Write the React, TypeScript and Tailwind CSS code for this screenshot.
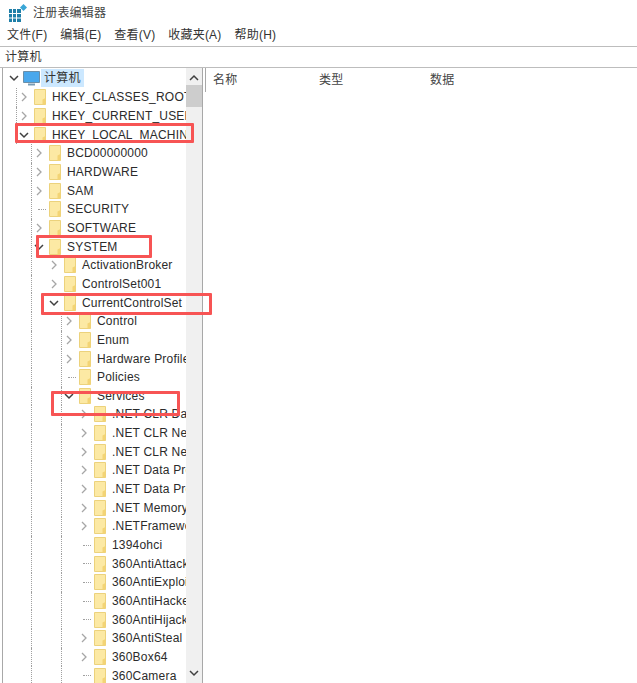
import React from "react";

const menus = ["文件(F)", "编辑(E)", "查看(V)", "收藏夹(A)", "帮助(H)"];

type Row = { name: string; level: number; arrow: "open" | "closed" | "none"; lines: number[] };

const rows: Row[] = [
    { name: "HKEY_CLASSES_ROOT", level: 1, arrow: "closed", lines: [0] },
    { name: "HKEY_CURRENT_USER", level: 1, arrow: "closed", lines: [0] },
    { name: "HKEY_LOCAL_MACHINE", level: 1, arrow: "open", lines: [0] },
    { name: "BCD00000000", level: 2, arrow: "closed", lines: [1] },
    { name: "HARDWARE", level: 2, arrow: "closed", lines: [1] },
    { name: "SAM", level: 2, arrow: "closed", lines: [1] },
    { name: "SECURITY", level: 2, arrow: "none", lines: [1] },
    { name: "SOFTWARE", level: 2, arrow: "closed", lines: [1] },
    { name: "SYSTEM", level: 2, arrow: "open", lines: [1] },
    { name: "ActivationBroker", level: 3, arrow: "closed", lines: [1] },
    { name: "ControlSet001", level: 3, arrow: "closed", lines: [1] },
    { name: "CurrentControlSet", level: 3, arrow: "open", lines: [1] },
    { name: "Control", level: 4, arrow: "closed", lines: [1, 3] },
    { name: "Enum", level: 4, arrow: "closed", lines: [1, 3] },
    { name: "Hardware Profiles", level: 4, arrow: "closed", lines: [1, 3] },
    { name: "Policies", level: 4, arrow: "none", lines: [1, 3] },
    { name: "Services", level: 4, arrow: "open", lines: [1, 3] },
    { name: ".NET CLR Data", level: 5, arrow: "closed", lines: [1, 3, 5] },
    { name: ".NET CLR Networking", level: 5, arrow: "closed", lines: [1, 3, 5] },
    { name: ".NET CLR Networking 4", level: 5, arrow: "closed", lines: [1, 3, 5] },
    { name: ".NET Data Provider", level: 5, arrow: "closed", lines: [1, 3, 5] },
    { name: ".NET Data Provider", level: 5, arrow: "closed", lines: [1, 3, 5] },
    { name: ".NET Memory Cache", level: 5, arrow: "closed", lines: [1, 3, 5] },
    { name: ".NETFramework", level: 5, arrow: "closed", lines: [1, 3, 5] },
    { name: "1394ohci", level: 5, arrow: "none", lines: [1, 3, 5] },
    { name: "360AntiAttack", level: 5, arrow: "none", lines: [1, 3, 5] },
    { name: "360AntiExploit", level: 5, arrow: "none", lines: [1, 3, 5] },
    { name: "360AntiHacker", level: 5, arrow: "none", lines: [1, 3, 5] },
    { name: "360AntiHijack", level: 5, arrow: "none", lines: [1, 3, 5] },
    { name: "360AntiSteal", level: 5, arrow: "closed", lines: [1, 3, 5] },
    { name: "360Box64", level: 5, arrow: "closed", lines: [1, 3, 5] },
    { name: "360Camera", level: 5, arrow: "none", lines: [1, 3, 5] },
];

const marks = [
    "left-[15px] top-[123px] w-[179px] h-[20px]",
    "left-[36px] top-[235px] w-[116px] h-[23px]",
    "left-[41px] top-[293px] w-[171px] h-[22px]",
    "left-[51px] top-[391px] w-[129px] h-[25px]",
];

const Folder = () => (
    <svg width="14" height="16" viewBox="0 0 14 16" className="shrink-0">
        <path d="M1.5 .5H12.5V15.5H1.5Z" fill="#fce9a4" stroke="#ecd27c" />
        <path d="M9.5 10.5L12.5 9V15.5H9.5Z" fill="#f3d475" />
    </svg>
);

const Arrow = ({ type }: { type: Row["arrow"] }) => {
    if (type === "open")
        return (
            <svg width="10" height="10" viewBox="0 0 10 10">
                <path d="M1 3L5 7L9 3" fill="none" stroke="#404040" strokeWidth="1.5" />
            </svg>
        );
    if (type === "closed")
        return (
            <svg width="10" height="10" viewBox="0 0 10 10">
                <path d="M3 1L7 5L3 9" fill="none" stroke="#a6a6a6" strokeWidth="1.3" />
            </svg>
        );
    return <div className="ml-[4px] w-[8px] border-t border-dotted border-[#a0a0a0]" />;
};

const TreeRow = ({ row }: { row: Row }) => (
    <div className="flex h-[18.67px] shrink-0 items-center whitespace-nowrap">
        {[0, 1, 2, 3, 4, 5].slice(0, row.level).map((i) => (
            <div key={i} className="h-full w-[15px] shrink-0">
                {row.lines.includes(i) && (
                    <div className="ml-[13px] h-full border-l border-dotted border-[#a0a0a0]" />
                )}
            </div>
        ))}
        <div className="flex w-[15px] shrink-0 items-center justify-start pl-[1px]">
            <Arrow type={row.arrow} />
        </div>
        <Folder />
        <span className="ml-[5px] text-[#2b2b2b]">{row.name}</span>
    </div>
);

const App = () => (
    <div className="flex h-[683px] w-[637px] flex-col overflow-hidden bg-white font-['Liberation_Sans','Noto_Sans_CJK_SC',sans-serif] text-[12px] tracking-[0.2px] text-[#333]">
        <div className="flex h-[24px] shrink-0 items-center gap-[5px] pl-[8px] pt-[2px] text-[#444]">
            <svg width="20" height="20" viewBox="0 0 20 20">
                <path d="M1 6H13V19H1Z" fill="#1f7fa8" />
                <path d="M4.5 6V19M8.5 6V19M1 10.5H13M1 15H13" stroke="#fff" strokeWidth="1" />
                <path d="M15.5 1L19 4.5L15.5 8L12 4.5Z" fill="#39a6d6" />
            </svg>
            注册表编辑器
        </div>
        <div className="flex h-[22px] shrink-0 items-center gap-[13px] pl-[7px]">
            {menus.map((m) => (
                <span key={m}>{m}</span>
            ))}
        </div>
        <div className="flex h-[22px] shrink-0 items-center border-y border-[#bdbdbd] pl-[5px]">计算机</div>
        <div className="relative flex min-h-0 flex-1">
            <div className="ml-[2px] flex w-[201px] shrink-0 border-x border-[#a8a8a8]">
                <div className="flex min-w-0 flex-1 flex-col overflow-hidden">
                    <div className="flex h-[20px] shrink-0 items-center pl-[6px]">
                        <svg width="10" height="10" viewBox="0 0 10 10">
                            <path d="M1 3L5 7L9 3" fill="none" stroke="#404040" strokeWidth="1.5" />
                        </svg>
                        <svg width="17" height="15" viewBox="0 0 17 15" className="ml-[4px] shrink-0">
                            <path d="M.5 .5H16.5V11.5H.5Z" fill="#4aa8ec" stroke="#6b8fa8" />
                            <path d="M5 13.5H12" stroke="#7a9cb4" strokeWidth="2" />
                        </svg>
                        <span className="ml-[1px] bg-[#cce8ff] px-[3px]">计算机</span>
                    </div>
                    {rows.map((r, i) => (
                        <TreeRow key={i} row={r} />
                    ))}
                </div>
                <div className="flex w-[16px] shrink-0 flex-col items-center justify-between bg-[#f0f0f0] py-[6px]">
                    <div className="flex w-full flex-col items-center">
                        <svg width="10" height="8" viewBox="0 0 10 8">
                            <path d="M1 6L5 2L9 6" fill="none" stroke="#404040" strokeWidth="1.5" />
                        </svg>
                        <div className="mt-[3px] h-[22px] w-full bg-[#cdcdcd]" />
                    </div>
                    <svg width="10" height="8" viewBox="0 0 10 8">
                        <path d="M1 2L5 6L9 2" fill="none" stroke="#404040" strokeWidth="1.5" />
                    </svg>
                </div>
            </div>
            <div className="ml-[2px] flex h-[24px] flex-1 items-center border-l border-[#a8a8a8] text-[#444]">
                <span className="w-[111px] pl-[7px]">名称</span>
                <span className="w-[111px] pl-[2px]">类型</span>
                <span className="pl-[2px]">数据</span>
            </div>
        </div>
        {marks.map((m) => (
            <div key={m} className={"absolute rounded-[1px] border-[3px] border-[#f75454] " + m} />
        ))}
    </div>
);

export default App;
